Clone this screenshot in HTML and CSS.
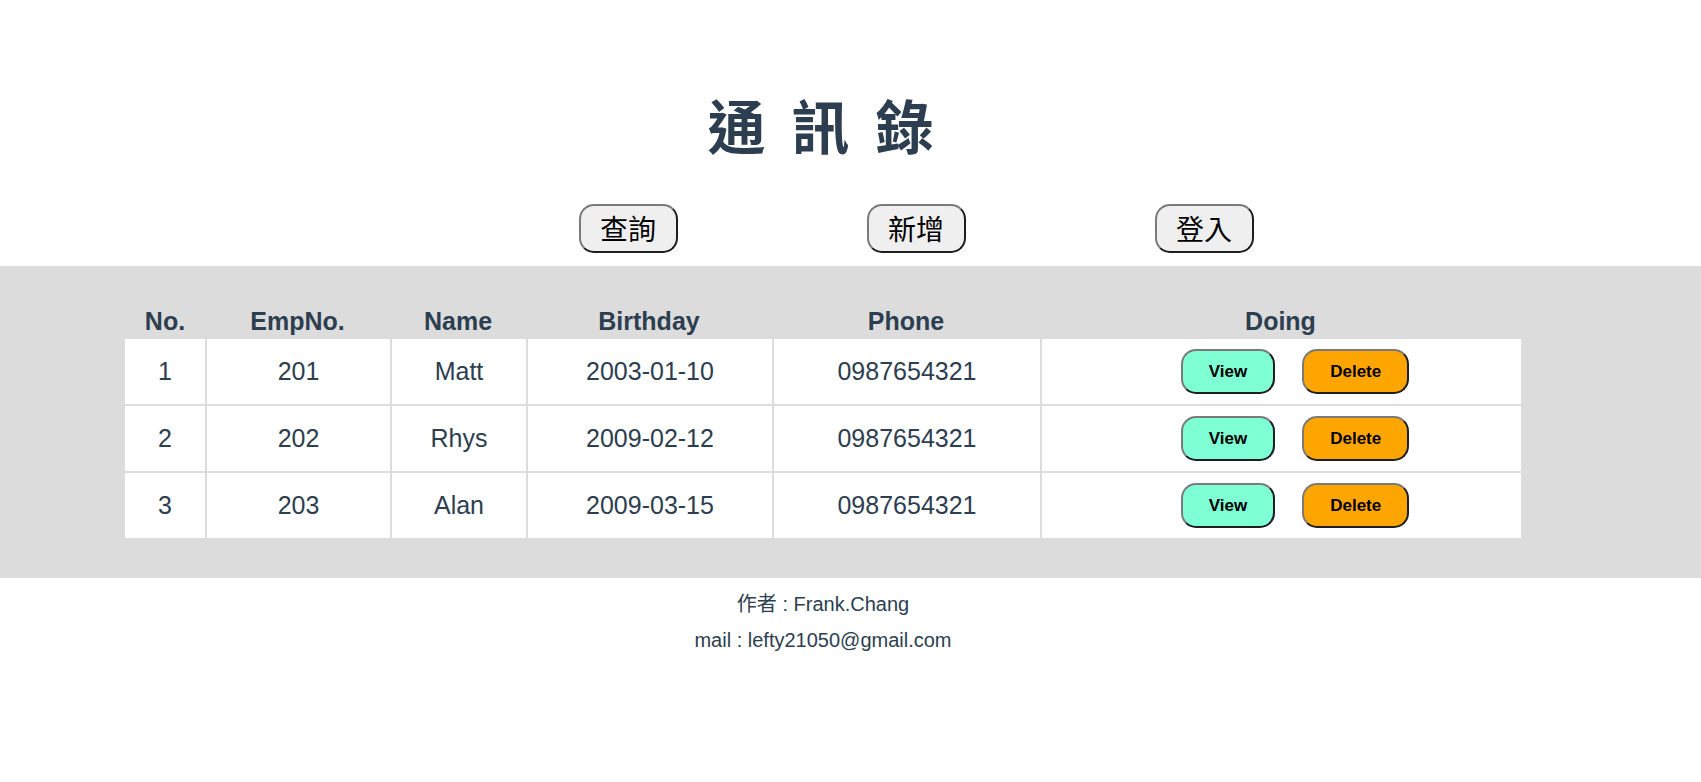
FILE: index.html
```html
<!DOCTYPE html>
<html lang="zh-Hant">
<head>
<meta charset="utf-8">
<title>通訊錄</title>
<link rel="stylesheet" href="styles.css">
</head>
<body>
<header class="top">
  <div class="inner">
    <h1 class="title">通 訊 錄</h1>
    <nav class="menu">
      <button class="menu-btn">查詢</button>
      <button class="menu-btn">新增</button>
      <button class="menu-btn">登入</button>
    </nav>
  </div>
</header>
<section class="band">
  <div class="inner">
    <table class="contacts">
      <thead>
        <tr>
          <th class="c-no">No.</th>
          <th class="c-emp">EmpNo.</th>
          <th class="c-name">Name</th>
          <th class="c-birth">Birthday</th>
          <th class="c-phone">Phone</th>
          <th class="c-doing">Doing</th>
        </tr>
      </thead>
      <tbody>
        <tr>
          <td>1</td><td>201</td><td>Matt</td><td>2003-01-10</td><td>0987654321</td>
          <td><button class="act act-view">View</button><button class="act act-del">Delete</button></td>
        </tr>
        <tr>
          <td>2</td><td>202</td><td>Rhys</td><td>2009-02-12</td><td>0987654321</td>
          <td><button class="act act-view">View</button><button class="act act-del">Delete</button></td>
        </tr>
        <tr>
          <td>3</td><td>203</td><td>Alan</td><td>2009-03-15</td><td>0987654321</td>
          <td><button class="act act-view">View</button><button class="act act-del">Delete</button></td>
        </tr>
      </tbody>
    </table>
  </div>
</section>
<footer class="foot">
  <div class="inner">
    <p class="foot-line">作者 : Frank.Chang</p>
    <p class="foot-line">mail : lefty21050@gmail.com</p>
  </div>
</footer>
</body>
</html>
```

FILE: styles.css
```css
html, body {
  margin: 0;
  padding: 0;
  background: #ffffff;
}

body {
  font-family: "Liberation Sans", "Noto Sans CJK TC", Arial, sans-serif;
  color: #2c3e50;
}

.inner {
  width: 1646px;
  text-align: center;
}

.top {
  padding-top: 93px;
  padding-bottom: 13px;
}

.title {
  margin: 0;
  font-family: "Liberation Sans", "Noto Sans CJK TC", sans-serif;
  font-size: 58px;
  line-height: 72px;
  font-weight: 700;
  letter-spacing: 5px;
  color: #2c3e50;
}

.menu {
  display: flex;
  justify-content: center;
  gap: 189px;
  padding-left: 186px;
  margin-top: 39px;
}

.menu-btn {
  width: 99px;
  height: 49px;
  padding: 0;
  font-family: "Noto Sans CJK TC", sans-serif;
  font-size: 28px;
  font-weight: 400;
  line-height: 33px;
  color: #000;
  background: #efefef;
  border: 2px solid;
  border-color: #7a7a7a #1e1e1e #1e1e1e #7a7a7a;
  border-radius: 15px;
}

.band {
  background: #dcdcdc;
  padding: 41px 0 40px;
}

.contacts {
  width: 1396px;
  margin: 0 auto;
  border-collapse: separate;
  border-spacing: 0;
  table-layout: fixed;
  font-size: 25px;
  color: #2c3e50;
}

.contacts th {
  box-sizing: border-box;
  font-weight: 700;
  line-height: 29px;
  padding: 0 0 3px;
  text-align: center;
}

.c-no { width: 80px; }
.c-emp { width: 185px; }
.c-name { width: 136px; }
.c-birth { width: 246px; }
.c-phone { width: 268px; }
.c-doing { width: 481px; }

.contacts td {
  background: #ffffff;
  height: 65px;
  line-height: 29px;
  padding: 0;
  text-align: center;
  vertical-align: middle;
}

.contacts td + td {
  border-left: 2px solid #dcdcdc;
}

.contacts tbody tr + tr td {
  border-top: 2px solid #dcdcdc;
}

.act {
  display: inline-block;
  vertical-align: middle;
  margin-left: 27px;
  height: 45px;
  padding: 0 26px;
  font-family: "Liberation Sans", Arial, sans-serif;
  font-size: 17px;
  font-weight: 700;
  line-height: 41px;
  color: #000;
  border: 2px solid;
  border-color: #7a7a7a #1e1e1e #1e1e1e #7a7a7a;
  border-radius: 15px;
}

.act-view {
  background: #7fffd4;
}

.act-del {
  background: #ffa500;
}

.foot {
  padding-top: 8px;
}

.foot-line {
  margin: 0;
  font-size: 20px;
  line-height: 36px;
  color: #2c3e50;
}
```
